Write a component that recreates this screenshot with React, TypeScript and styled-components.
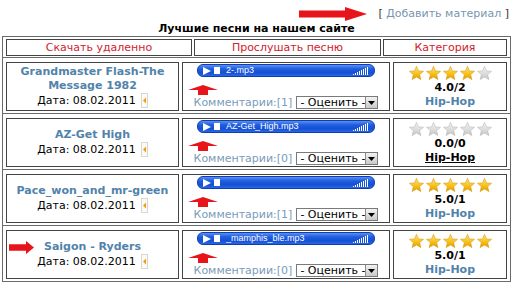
import React from "react";
import styled, { createGlobalStyle } from "styled-components";

const GlobalStyle = createGlobalStyle`
  html, body {
    margin: 0;
    padding: 0;
    background: #ffffff;
  }
  body {
    font-family: "DejaVu Sans", Verdana, sans-serif;
    font-size: 11px;
    color: #000;
  }
  svg {
    flex-shrink: 0;
  }
`;

const Page = styled.div`
  width: 509px;
  margin-left: 2px;
`;

const TopBar = styled.div`
  display: flex;
  justify-content: flex-end;
  align-items: center;
  gap: 11px;
  height: 22px;
  padding-top: 5px;
  padding-right: 2px;
  box-sizing: border-box;
`;

const TopArrow = styled.span`
  display: flex;
  width: 68px;
  height: 14px;
`;

const AddLink = styled.span`
  font-size: 11px;
  line-height: 14px;
  color: #333;

  a {
    color: #7896b0;
    text-decoration: none;
  }
`;

const Caption = styled.div`
  text-align: center;
  font-weight: bold;
  font-size: 11px;
  line-height: 14px;
  height: 14px;
`;

const HeadTable = styled.div`
  display: grid;
  grid-template-columns: 186px 187px 124px;
  column-gap: 2px;
  border: 1px solid #6a6a6a;
  padding: 2px 3px 1px 3px;
`;

const HeadCell = styled.div`
  border: 1px solid #444;
  height: 15px;
  line-height: 15px;
  text-align: center;
  color: #d2222c;
  font-size: 11px;
`;

const EntryTable = styled.div`
  display: grid;
  grid-template-columns: 173px 208px 114px;
  column-gap: 3px;
  border: 1px solid #6a6a6a;
  border-top: none;
  padding: 4px 3px 2px 3px;
`;

const Cell = styled.div<{ $align?: string }>`
  position: relative;
  border: 1px solid #444;
  height: 47px;
  display: flex;
  flex-direction: column;
  align-items: center;
  justify-content: ${(p) => p.$align || "flex-start"};
  text-align: center;
`;

const SongTitle = styled.a`
  font-weight: bold;
  font-size: 11px;
  line-height: 14px;
  color: #5283ab;
  text-decoration: none;
`;

const DateLine = styled.div`
  display: flex;
  align-items: center;
  line-height: 14px;
  font-size: 11px;
`;

const Marker = styled.span`
  position: absolute;
  left: 2px;
  top: 10px;
  display: flex;
`;

const Player = styled.div`
  margin-top: 1px;
  width: 167px;
  height: 11px;
  border: 1px solid #0b3fb2;
  border-radius: 6px;
  background: linear-gradient(#5f8ef0 0%, #1f5ee0 35%, #1450d4 70%, #2a66e4 100%);
  display: flex;
  align-items: center;
  padding: 0 4px 0 5px;
  gap: 3px;
  box-sizing: content-box;
`;

const StopBox = styled.span`
  width: 6px;
  height: 7px;
  background: #fff;
`;

const FileName = styled.span`
  flex: 1;
  text-align: left;
  font-family: "Liberation Sans", Arial, sans-serif;
  font-size: 9px;
  line-height: 11px;
  color: #fff;
  margin-left: 3px;
  white-space: nowrap;
  overflow: hidden;
`;

const UpArrowWrap = styled.div`
  align-self: flex-start;
  margin: 8px 0 0 5px;
  display: flex;
`;

const CommentsRow = styled.div`
  display: flex;
  align-items: center;
  gap: 4px;
  margin-top: 1px;
`;

const Comments = styled.a`
  color: #7a9cb9;
  font-size: 11px;
  line-height: 13px;
  text-decoration: none;
`;

const RateSelect = styled.div`
  display: flex;
  align-items: stretch;
  width: 82px;
  height: 13px;
  border: 1px solid #7a7a7a;
  box-sizing: border-box;
  background: #fff;
  font-size: 11px;
  line-height: 11px;
`;

const SelectText = styled.span`
  flex: 1;
  padding-left: 3px;
  text-align: left;
  white-space: nowrap;
`;

const SelectButton = styled.span`
  width: 12px;
  background: linear-gradient(#f2f2f2, #c9c9c9);
  border-left: 1px solid #8a8a8a;
  display: flex;
  align-items: center;
  justify-content: center;
`;

const Stars = styled.div`
  display: flex;
  gap: 2px;
  margin-top: 3px;
  height: 14px;
`;

const Score = styled.div`
  font-weight: bold;
  font-size: 11px;
  line-height: 14px;
  margin-top: 1px;
`;

const Genre = styled.a<{ $visited?: boolean }>`
  font-weight: bold;
  font-size: 11px;
  line-height: 14px;
  color: ${(p) => (p.$visited ? "#000" : "#5283ab")};
  text-decoration: ${(p) => (p.$visited ? "underline" : "none")};
`;

function RightArrow({ w, h }: { w: number; h: number }) {
  const head = Math.round(w * 0.33);
  const stemTop = h * 0.25;
  const stemBottom = h * 0.75;
  return (
    <svg width={w} height={h} viewBox={`0 0 ${w} ${h}`}>
      <path
        d={`M0 ${stemTop} L${w - head} ${stemTop} L${w - head} 0 L${w} ${h / 2} L${w - head} ${h} L${w - head} ${stemBottom} L0 ${stemBottom} Z`}
        fill="#e8141c"
      />
    </svg>
  );
}

function UpArrow() {
  return (
    <svg width="30" height="10" viewBox="0 0 30 10">
      <path d="M15 0 L30 5 L20 5 L20 10 L10 10 L10 5 L0 5 Z" fill="#e8141c" />
    </svg>
  );
}

function DateIcon() {
  return (
    <svg width="7" height="15" viewBox="0 0 7 15" style={{ marginLeft: 5 }}>
      <rect x="0.5" y="0.5" width="6" height="14" fill="#fbfbf6" stroke="#d8d8d0" />
      <path d="M2 7.5 L5 4.5 L5 10.5 Z" fill="#f29a1a" />
    </svg>
  );
}

function Star({ on }: { on: boolean }) {
  const id = on ? "starOn" : "starOff";
  return (
    <svg width="15" height="14" viewBox="0 0 15 14">
      <defs>
        <linearGradient id="starOn" x1="0" y1="0" x2="0" y2="1">
          <stop offset="0" stopColor="#ffe680" />
          <stop offset="0.55" stopColor="#f7c21a" />
          <stop offset="1" stopColor="#e59a00" />
        </linearGradient>
        <linearGradient id="starOff" x1="0" y1="0" x2="0" y2="1">
          <stop offset="0" stopColor="#f6f6f6" />
          <stop offset="1" stopColor="#c6c6c6" />
        </linearGradient>
      </defs>
      <path
        d="M7.5 0.3 L9.44 4.93 L14.54 5.31 L10.64 8.62 L11.85 13.59 L7.5 10.9 L3.15 13.59 L4.36 8.62 L0.46 5.31 L5.56 4.93 Z"
        fill={`url(#${id})`}
        stroke={on ? "#d99a10" : "#b8b8b8"}
        strokeWidth="0.6"
      />
    </svg>
  );
}

function PlayIcon() {
  return (
    <svg width="8" height="8" viewBox="0 0 8 8">
      <path d="M0 0 L8 4 L0 8 Z" fill="#fff" />
    </svg>
  );
}

function VolumeBars() {
  const bars = [1, 2, 3, 4, 5, 6, 7, 8];
  return (
    <svg width="17" height="9" viewBox="0 0 17 9">
      {bars.map((b, i) => (
        <rect key={i} x={i * 2} y={9 - b} width="1" height={b} fill="#fff" />
      ))}
    </svg>
  );
}

function DropArrow() {
  return (
    <svg width="7" height="4" viewBox="0 0 7 4">
      <path d="M0 0 L7 0 L3.5 4 Z" fill="#000" />
    </svg>
  );
}

type Song = {
  title: string;
  file: string;
  comments: number;
  stars: number;
  score: string;
  visited?: boolean;
  marked?: boolean;
};

const songs: Song[] = [
  { title: "Grandmaster Flash-The Message 1982", file: "2-.mp3", comments: 1, stars: 4, score: "4.0/2" },
  { title: "AZ-Get High", file: "AZ-Get_High.mp3", comments: 0, stars: 0, score: "0.0/0", visited: true },
  { title: "Pace_won_and_mr-green", file: "", comments: 1, stars: 5, score: "5.0/1" },
  { title: "Saigon - Ryders", file: "_mamphis_ble.mp3", comments: 0, stars: 5, score: "5.0/1", marked: true },
];

export default function App() {
  return (
    <>
      <GlobalStyle />
      <Page>
        <TopBar>
          <TopArrow>
            <RightArrow w={68} h={14} />
          </TopArrow>
          <AddLink>
            [ <a href="#">Добавить материал</a> ]
          </AddLink>
        </TopBar>
        <Caption>Лучшие песни на нашем сайте</Caption>
        <HeadTable>
          <HeadCell>Скачать удаленно</HeadCell>
          <HeadCell>Прослушать песню</HeadCell>
          <HeadCell>Категория</HeadCell>
        </HeadTable>
        {songs.map((s) => (
          <EntryTable key={s.title}>
            <Cell $align="center">
              {s.marked && (
                <Marker>
                  <RightArrow w={25} h={13} />
                </Marker>
              )}
              <SongTitle href="#">{s.title}</SongTitle>
              <DateLine>
                Дата: 08.02.2011
                <DateIcon />
              </DateLine>
            </Cell>
            <Cell>
              <Player>
                <PlayIcon />
                <StopBox />
                <FileName>{s.file}</FileName>
                <VolumeBars />
              </Player>
              <UpArrowWrap>
                <UpArrow />
              </UpArrowWrap>
              <CommentsRow>
                <Comments href="#">Комментарии:[{s.comments}]</Comments>
                <RateSelect>
                  <SelectText>- Оценить -</SelectText>
                  <SelectButton>
                    <DropArrow />
                  </SelectButton>
                </RateSelect>
              </CommentsRow>
            </Cell>
            <Cell>
              <Stars>
                {[0, 1, 2, 3, 4].map((i) => (
                  <Star key={i} on={i < s.stars} />
                ))}
              </Stars>
              <Score>{s.score}</Score>
              <Genre href="#" $visited={s.visited}>
                Hip-Hop
              </Genre>
            </Cell>
          </EntryTable>
        ))}
      </Page>
    </>
  );
}
